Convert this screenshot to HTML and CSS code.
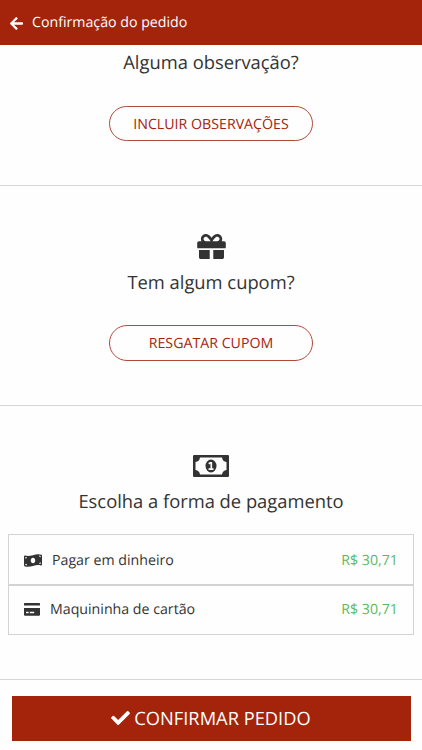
FILE: index.html
```
<!DOCTYPE html>
<html lang="pt-BR">
<head>
    <meta charset="UTF-8">
    <meta name="viewport" content="width=device-width, initial-scale=1.0">
    <title>Confirmação do pedido</title>
    <link rel="stylesheet" href="styles.css">
</head>
<body>
    <header class="topbar">
        <svg class="back-icon" viewBox="0 32 448 448"><path fill="currentColor" d="M257.5 445.1l-22.2 22.2c-9.4 9.4-24.6 9.4-33.9 0L7 273c-9.4-9.4-9.4-24.6 0-33.9L201.4 44.7c9.4-9.4 24.6-9.4 33.9 0l22.2 22.2c9.5 9.5 9.3 25-.4 34.3L136.6 216H424c13.3 0 24 10.7 24 24v32c0 13.3-10.7 24-24 24H136.6l120.5 114.8c9.8 9.3 10 24.8.4 34.3z"/></svg>
        <span class="topbar-title">Confirmação do pedido</span>
    </header>

    <main>
        <section class="section section-notes">
            <h2 class="section-title">Alguma observação?</h2>
            <button class="btn-outline">INCLUIR OBSERVAÇÕES</button>
        </section>

        <section class="section section-coupon">
            <svg class="gift-icon" viewBox="0 32 512 448"><path fill="currentColor" d="M32 448c0 17.7 14.3 32 32 32h160V320H32v128zm256 32h160c17.7 0 32-14.3 32-32V320H288v160zm192-320h-42.1c6.2-12.1 10.1-25.5 10.1-40 0-48.5-39.5-88-88-88-41.6 0-68.5 21.3-103 68.3-34.5-47-61.4-68.3-103-68.3-48.5 0-88 39.5-88 88 0 14.5 3.8 27.9 10.1 40H32c-17.7 0-32 14.3-32 32v80c0 8.8 7.2 16 16 16h480c8.8 0 16-7.2 16-16v-80c0-17.7-14.3-32-32-32zm-326.1 0c-22.1 0-40-17.9-40-40s17.9-40 40-40c19.9 0 34.6 3.3 86.1 80h-86.1zm206.1 0h-86.1c51.4-76.5 65.7-80 86.1-80 22.1 0 40 17.9 40 40s-17.9 40-40 40z"/></svg>
            <h2 class="section-title">Tem algum cupom?</h2>
            <button class="btn-outline">RESGATAR CUPOM</button>
        </section>

        <section class="section section-payment">
            <svg class="bill-icon" viewBox="0 0 36 22">
                <path fill="currentColor" fill-rule="evenodd" d="M1.2 0h33.6Q36 0 36 1.2v19.6q0 1.2-1.2 1.2H1.2Q0 22 0 20.8V1.2Q0 0 1.2 0zM7 2.5Q6.5 6.5 2.5 7v8q4 .5 4.500 4.500h22q.5-4 4.500-4.500V7q-4-.5-4.500-4.500z"/>
                <ellipse cx="18" cy="11" rx="5.500" ry="6.400" fill="currentColor"/>
                <path fill="none" stroke="#fff" stroke-width="1.700" d="M15.700 8.700l1.700-.9h.9v6.300M15.600 14.100h4.900"/>
            </svg>
            <h2 class="section-title">Escolha a forma de pagamento</h2>
            <ul class="payment-list">
                <li class="payment-item">
                    <svg class="cash-icon" viewBox="0 32 640 448"><path fill="currentColor" d="M621.160 54.460C582.370 38.190 543.550 32 504.750 32c-123.170-.01-246.330 62.340-369.500 62.340-30.890 0-61.760-3.920-92.650-13.720-3.470-1.100-6.950-1.620-10.350-1.620C15.040 79 0 92.320 0 110.810v317.260c0 12.630 7.230 24.600 18.840 29.460C57.630 473.810 96.450 480 135.250 480c123.170 0 246.340-62.350 369.510-62.350 30.890 0 61.760 3.920 92.650 13.720 3.470 1.100 6.950 1.620 10.350 1.620 17.210 0 32.250-13.320 32.250-31.810V83.930c-.01-12.640-7.240-24.600-18.850-29.470zM48 132.220c20.120 5.040 41.120 7.570 62.720 8.930C104.840 170.540 79 192.690 48 192.690v-60.470zm0 285v-47.780c34.370 0 62.180 27.270 63.710 61.400-22.530-1.810-43.590-6.310-63.710-13.620zM320 352c-44.190 0-80-42.990-80-96 0-53.020 35.820-96 80-96s80 42.980 80 96c0 53.030-35.830 96-80 96zm272 27.780c-17.520-4.390-35.710-6.850-54.320-8.440 5.870-26.080 27.500-45.880 54.320-49.280v57.720zm0-236.110c-30.890-3.910-54.860-29.700-55.810-61.550 19.540 2.170 38.090 6.230 55.810 12.660v48.890z"/></svg>
                    <span class="payment-name">Pagar em dinheiro</span>
                    <span class="payment-price">R$ 30,71</span>
                </li>
                <li class="payment-item">
                    <svg class="card-icon" viewBox="0 0 16 13">
                        <path fill="currentColor" fill-rule="evenodd" d="M.8 0h14.400q.8 0 .8.800V2.500H0V.8Q0 0 .8 0zM0 5h16v6.700q0 1-1 1H1q-1 0-1-1zM2 8.800v1.500h2.600V8.800zM5.800 8.800v1.500h4.400V8.800z"/>
                    </svg>
                    <span class="payment-name">Maquininha de cartão</span>
                    <span class="payment-price">R$ 30,71</span>
                </li>
            </ul>
        </section>
    </main>

    <footer class="footer">
        <button class="btn-confirm">
            <svg class="check-icon" viewBox="0 65 512 382"><path fill="currentColor" d="M173.898 439.404l-166.400-166.400c-9.997-9.997-9.997-26.206 0-36.204l36.203-36.204c9.997-9.998 26.207-9.998 36.204 0L192 312.690 432.095 72.596c9.997-9.997 26.207-9.997 36.204 0l36.203 36.204c9.997 9.997 9.997 26.206 0 36.204l-294.400 294.401c-9.998 9.997-26.207 9.997-36.204-.001z"/></svg>
            <span>CONFIRMAR PEDIDO</span>
        </button>
    </footer>
</body>
</html>
```
FILE: styles.css
```
* { box-sizing: border-box; }

body {
    margin: 0;
    height: 750px;
    overflow: hidden;
    background: #fefefe;
    color: #333;
    font-family: "Open Sans", "Noto Sans", sans-serif;
    text-rendering: geometricPrecision;
}

svg {
    display: block;
    flex-shrink: 0;
}

.topbar {
    display: flex;
    align-items: center;
    height: 45px;
    padding: 1px 10px 0;
    background: #a3240b;
    color: #fff;
}

.back-icon {
    width: 13px;
    height: 13px;
    margin-right: 9px;
}

.topbar-title {
    font-size: 14.2px;
    line-height: 20px;
}

/* Sections */
.section {
    display: flex;
    flex-direction: column;
    align-items: center;
    border-bottom: 1px solid #d6d6d6;
}

.section-notes {
    height: 141px;
    padding-top: 5px;
}

.section-coupon {
    height: 220px;
    padding-top: 48px;
}

.section-payment {
    height: 274px;
    padding: 49px 8px 0;
}

.section-title {
    margin: 0;
    font-size: 18.35px;
    font-weight: 400;
    line-height: 26px;
}

.btn-outline {
    width: 204px;
    height: 35px;
    margin-top: 30px;
    padding: 2px 0 0;
    background: transparent;
    border: 1px solid #b04a38;
    border-radius: 18px;
    color: #a3240b;
    font-family: inherit;
    font-size: 14.2px;
    text-rendering: inherit;
}

.gift-icon {
    width: 29px;
    height: 25px;
    margin-bottom: 11px;
}

.section-coupon .btn-outline {
    height: 36px;
    margin-top: 29px;
    padding-top: 1px;
}

.bill-icon {
    width: 36px;
    height: 22px;
    margin-bottom: 12px;
}

/* Payment options */
.payment-list {
    width: 100%;
    margin: 19px 0 0;
    padding: 0;
    list-style: none;
}

.payment-item {
    display: flex;
    align-items: center;
    height: 51px;
    padding: 1px 15px 0;
    border: 1px solid #d3d3d3;
    font-size: 14.2px;
}

.payment-item + .payment-item {
    height: 50px;
    padding: 0 15px 1px;
}

.cash-icon {
    width: 18px;
    height: 13px;
    margin-right: 10px;
}

.card-icon {
    width: 16px;
    height: 13px;
    margin-right: 10px;
}

.payment-price {
    margin-left: auto;
    color: #5cb860;
}

/* Confirm */
.footer {
    padding: 16px 11px 9px 12px;
}

.btn-confirm {
    display: flex;
    align-items: center;
    justify-content: center;
    width: 100%;
    height: 45px;
    padding: 0 1px 1px 0;
    background: #a3240b;
    border: none;
    color: #fff;
    font-family: inherit;
    font-size: 18.3px;
    text-rendering: inherit;
}

.check-icon {
    width: 19px;
    height: 14px;
    margin-right: 4px;
}
```
